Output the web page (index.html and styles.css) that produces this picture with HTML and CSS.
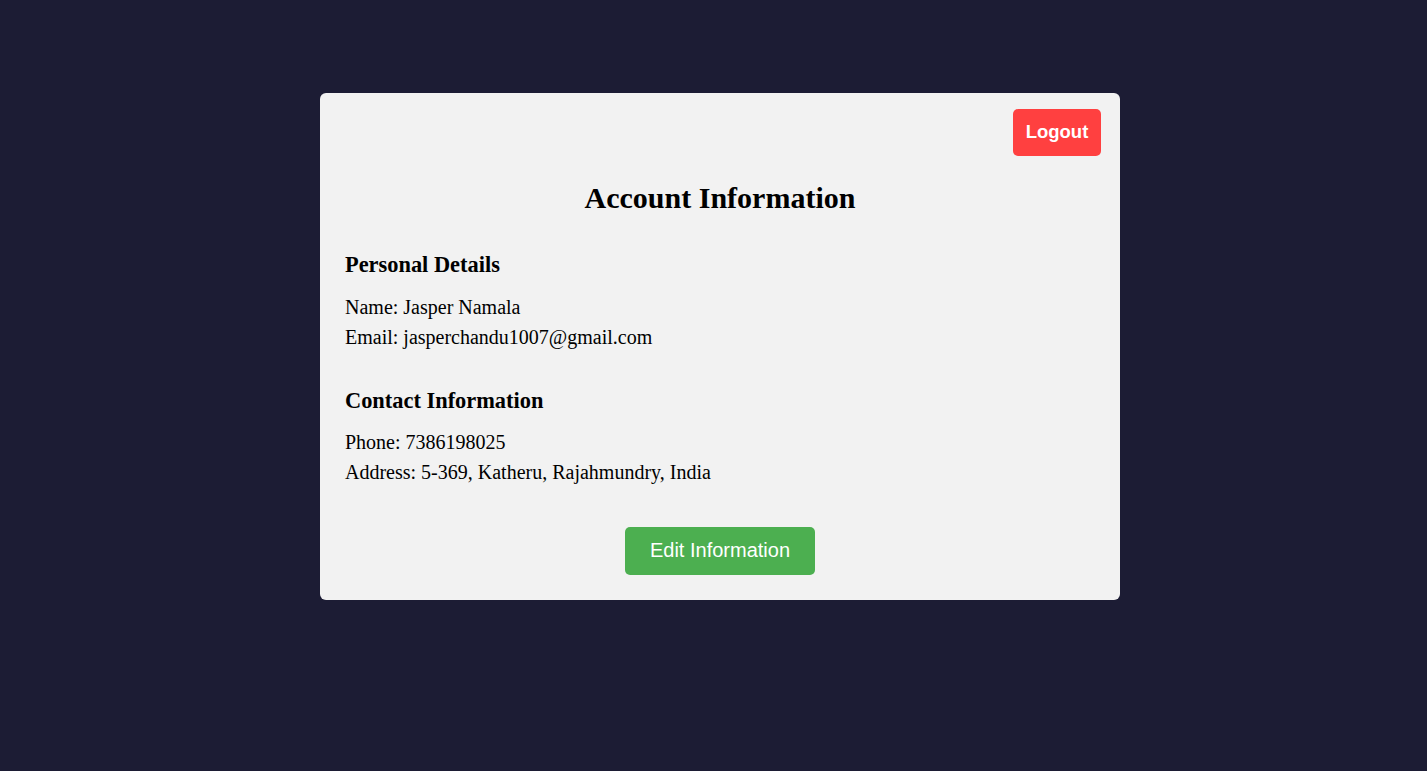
FILE: index.html
```html
<!DOCTYPE html>
<html lang="en">
<head>
<meta charset="utf-8">
<title>Account Information</title>
<link rel="stylesheet" href="styles.css">
</head>
<body>
<main class="card">
  <div class="topbar">
    <button class="logout">Logout</button>
  </div>
  <h2 class="title">Account Information</h2>
  <section class="section">
    <h3 class="section-title">Personal Details</h3>
    <p class="line">Name: Jasper Namala</p>
    <p class="line">Email: jasperchandu1007@gmail.com</p>
  </section>
  <section class="section">
    <h3 class="section-title">Contact Information</h3>
    <p class="line">Phone: 7386198025</p>
    <p class="line">Address: 5-369, Katheru, Rajahmundry, India</p>
  </section>
  <div class="actions">
    <button class="edit">Edit Information</button>
  </div>
</main>
</body>
</html>
```

FILE: styles.css
```css
html, body {
  margin: 0;
  padding: 0;
}
body {
  background: #1c1c34;
  font-family: "Liberation Serif", "Times New Roman", serif;
  color: #000;
  min-height: 771px;
}
.card {
  box-sizing: border-box;
  width: 800px;
  margin: 93px 0 0 320px;
  background: #f2f2f2;
  border-radius: 6px;
  padding: 16px 25px 25px;
}
.topbar {
  display: flex;
  justify-content: flex-end;
  margin-right: -6px;
}
.logout {
  background: #ff4040;
  color: #fff;
  border: none;
  border-radius: 5px;
  font-family: "Liberation Sans", Arial, sans-serif;
  font-weight: bold;
  font-size: 18.5px;
  line-height: 21px;
  padding: 12px 10px 14px;
  height: 47px;
  width: 88px;
  cursor: pointer;
}
.title {
  margin: 24px 0 0;
  font-size: 30px;
  line-height: 36px;
  font-weight: bold;
  text-align: center;
}
.section-title {
  margin: 35px 0 13px;
  font-size: 22.4px;
  line-height: 28px;
  font-weight: bold;
}
.section + .section .section-title {
  margin-top: 35px;
  margin-bottom: 12px;
}
.line {
  margin: 0;
  font-size: 20px;
  line-height: 30px;
}
.actions {
  display: flex;
  justify-content: center;
  margin-top: 40px;
}
.edit {
  background: #4caf50;
  color: #fff;
  border: none;
  border-radius: 5px;
  font-family: "Liberation Sans", Arial, sans-serif;
  font-size: 20px;
  line-height: 23px;
  height: 48px;
  padding: 0 25px 2px;
  cursor: pointer;
}
```
